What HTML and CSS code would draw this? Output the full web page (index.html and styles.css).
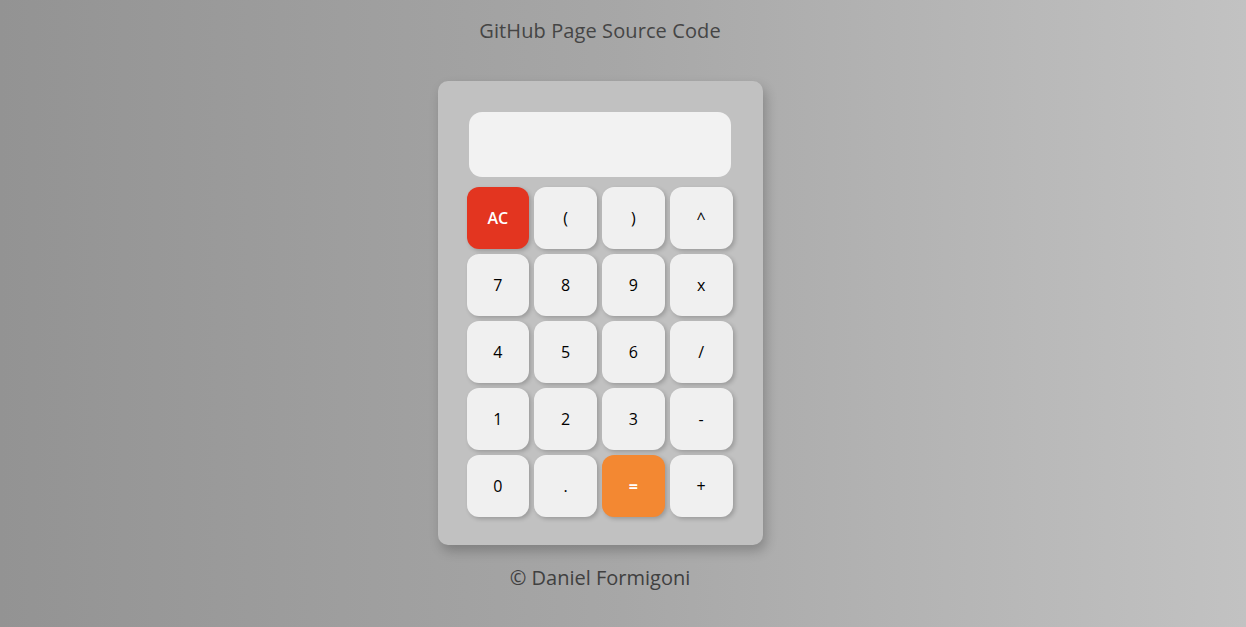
FILE: index.html
```html
<!DOCTYPE html>
<html lang="en">
<head>
<meta charset="utf-8">
<title>Calculator</title>
<link rel="stylesheet" href="styles.css">
</head>
<body>
<header class="top">
  <a class="source-link" href="#">GitHub Page Source Code</a>
</header>
<main class="calculator">
  <div class="display"></div>
  <div class="keys">
    <button class="key key-clear">AC</button>
    <button class="key">(</button>
    <button class="key">)</button>
    <button class="key">^</button>
    <button class="key">7</button>
    <button class="key">8</button>
    <button class="key">9</button>
    <button class="key">x</button>
    <button class="key">4</button>
    <button class="key">5</button>
    <button class="key">6</button>
    <button class="key">/</button>
    <button class="key">1</button>
    <button class="key">2</button>
    <button class="key">3</button>
    <button class="key">-</button>
    <button class="key">0</button>
    <button class="key">.</button>
    <button class="key key-equals">=</button>
    <button class="key">+</button>
  </div>
</main>
<footer class="credit">© Daniel Formigoni</footer>
</body>
</html>
```

FILE: styles.css
```css
* { box-sizing: border-box; }

html, body { height: 100%; }

body {
  margin: 0;
  padding-right: 46px;
  min-height: 627px;
  background: linear-gradient(to right, #939393 0%, #a7a7a7 50%, #c2c2c2 100%);
  font-family: "Open Sans", "Liberation Sans", sans-serif;
  color: #444;
  display: flex;
  flex-direction: column;
  align-items: center;
}

.top {
  padding-top: 17px;
  height: 81px;
}

.source-link {
  font-size: 20px;
  color: #454545;
  text-decoration: none;
  letter-spacing: 0.1px;
}

.calculator {
  width: 325px;
  background: #c1c1c1;
  border-radius: 10px;
  padding: 31px 30px 28px 29px;
  box-shadow: 3px 6px 12px rgba(0, 0, 0, 0.22);
}

.display {
  height: 65px;
  margin: 0 2px 10px 2px;
  background: #f2f2f2;
  border-radius: 13px;
}

.keys {
  display: grid;
  grid-template-columns: repeat(4, 1fr);
  grid-auto-rows: 62px;
  column-gap: 5px;
  row-gap: 5px;
}

.key {
  border: none;
  border-radius: 12px;
  background: #f0f0f0;
  box-shadow: 2px 2px 4px rgba(0, 0, 0, 0.2);
  font-family: "Open Sans", "Liberation Sans", sans-serif;
  font-size: 16px;
  font-weight: 500;
  color: #000;
  padding: 0;
}

.key-clear {
  background: #e33520;
  color: #fff;
  font-weight: 600;
}

.key-equals {
  background: #f38832;
  color: #fff;
  font-weight: 700;
}

.credit {
  margin-top: 19px;
  font-size: 20px;
  color: #404040;
}
```
